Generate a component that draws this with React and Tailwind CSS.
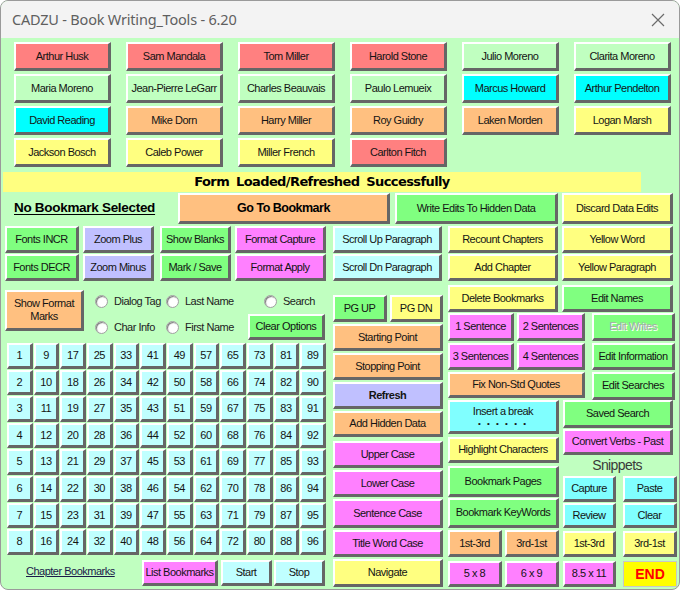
const BTN =
  'flex items-center justify-center text-center leading-[1.15] text-[11px] tracking-[-0.5px] text-[#141414] border-t-2 border-l-2 border-t-white border-l-white border-b-[3px] border-r-[3px] border-b-[#666] border-r-[#666]'

const RED = 'bg-[#ff8080]'
const GRN = 'bg-[#80ff80]'
const LG = 'bg-[#c0ffc0]'
const CY = 'bg-[#00ffff]'
const OR = 'bg-[#ffc080]'
const YE = 'bg-[#ffff80]'
const MA = 'bg-[#ff80ff]'
const LV = 'bg-[#c0c0ff]'
const PC = 'bg-[#c0ffff]'
const AQ = 'bg-[#80ffff]'

const NAMES = [
  [['Arthur Husk', RED], ['Maria Moreno', LG], ['David Reading', CY], ['Jackson Bosch', YE]],
  [['Sam Mandala', RED], ['Jean-Pierre LeGarr', LG], ['Mike Dorn', OR], ['Caleb Power', YE]],
  [['Tom Miller', RED], ['Charles Beauvais', LG], ['Harry Miller', OR], ['Miller French', YE]],
  [['Harold Stone', RED], ['Paulo Lemueix', LG], ['Roy Guidry', OR], ['Carlton Fitch', RED]],
  [['Julio Moreno', LG], ['Marcus Howard', CY], ['Laken Morden', OR]],
  [['Clarita Moreno', LG], ['Arthur Pendelton', CY], ['Logan Marsh', YE]],
]

function Btn({ className = '', children }) {
  return <div className={`${BTN} ${className}`}>{children}</div>
}

function Radio({ label, className = '' }) {
  return (
    <div className={`flex items-center ${className}`}>
      <span className="w-[13px] h-[13px] rounded-full bg-white border border-[#a0a0a0] shadow-[inset_1px_1px_1px_#7a7a7a] shrink-0" />
      <span className="ml-[6px] text-[11px] tracking-[-0.5px] text-[#222]">{label}</span>
    </div>
  )
}

export default function App() {
  const cells = Array.from({ length: 96 }, (_, i) => {
    const r = Math.floor(i / 12)
    const c = i % 12
    return c * 8 + r + 1
  })

  return (
    <div className="w-[680px] h-[590px] overflow-hidden rounded-[8px] border border-[#9a9a9a] bg-[#c0ffc0] font-['Liberation_Sans',Arial,sans-serif]">
      {/* title bar */}
      <div className="h-[37px] bg-[#f3f3f3] flex items-center justify-between pl-[11px] pr-[14px]">
        <span className="font-['Noto_Sans',sans-serif] text-[14.5px] tracking-[-0.2px] text-[#5f5f5f]">
          CADZU - Book Writing_Tools - 6.20
        </span>
        <svg width="14" height="14" viewBox="0 0 14 14" className="mt-[1px]">
          <path d="M1 1 L13 13 M13 1 L1 13" stroke="#6b6b6b" strokeWidth="1.2" />
        </svg>
      </div>

      {/* name buttons */}
      <div className="flex gap-[15px] pl-[13px] pt-[4px]">
        {NAMES.map((col, i) => (
          <div key={i} className="flex flex-col gap-[3px] w-[97px]">
            {col.map(([n, c]) => (
              <Btn key={n} className={`${c} h-[29px]`}>{n}</Btn>
            ))}
          </div>
        ))}
      </div>

      {/* status */}
      <div className="ml-[2px] mt-[5px] h-[20px] w-[638px] bg-[#ffff80] flex items-center justify-center font-['DejaVu_Sans',sans-serif] font-bold text-[13px] tracking-[-0.6px] [word-spacing:3px] text-black">
        Form Loaded/Refreshed Successfully
      </div>

      {/* row 1 */}
      <div className="flex mt-[1px] h-[31px]">
        <div className="w-[177px] pl-[13px] self-center font-bold text-[13.5px] tracking-[-0.3px] underline underline-offset-2 text-black">
          No Bookmark Selected
        </div>
        <Btn className={`${OR} w-[212px] h-[31px] font-bold text-[12.5px] text-black`}>Go To Bookmark</Btn>
        <Btn className={`${GRN} w-[163px] h-[31px] ml-[5px]`}>Write Edits To Hidden Data</Btn>
        <Btn className={`${YE} w-[111px] h-[31px] ml-[4px]`}>Discard Data Edits</Btn>
      </div>

      {/* row 2 */}
      <div className="flex mt-[2px] pl-[4px]">
        {[
          [['Fonts INCR', 'Fonts DECR'], GRN, 'w-[74px]', ''],
          [['Zoom Plus', 'Zoom Minus'], LV, 'w-[71px]', 'ml-[4px]'],
          [['Show Blanks', 'Mark / Save'], GRN, 'w-[71px]', 'ml-[6px]'],
          [['Format Capture', 'Format Apply'], MA, 'w-[91px]', 'ml-[4px]'],
          [['Scroll Up Paragraph', 'Scroll Dn Paragraph'], PC, 'w-[109px]', 'ml-[7px]'],
          [['Recount Chapters', 'Add Chapter'], YE, 'w-[110px]', 'ml-[6px]'],
          [['Yellow Word', 'Yellow Paragraph'], YE, 'w-[111px]', 'ml-[4px]'],
        ].map(([labels, c, w, ml]) => (
          <div key={labels[0]} className={`flex flex-col gap-[1px] ${w} ${ml}`}>
            {labels.map((l) => (
              <Btn key={l} className={`${c} h-[27px]`}>{l}</Btn>
            ))}
          </div>
        ))}
      </div>

      {/* row 3 */}
      <div className="flex mt-[2px]">
        {/* left part */}
        <div className="w-[327px] pl-[4px]">
          <div className="flex h-[58px]">
            <Btn className={`${OR} w-[79px] h-[41px] mt-[7px]`}>
              Show Format
              <br />
              Marks
            </Btn>
            <div className="ml-[11px] flex flex-col">
              <div className="flex items-center mt-[11px] h-[14px]">
                <Radio label="Dialog Tag" className="w-[71px]" />
                <Radio label="Last Name" className="w-[98px]" />
                <Radio label="Search" />
              </div>
              <div className="flex items-center mt-[6px] h-[26px]">
                <Radio label="Char Info" className="w-[71px]" />
                <Radio label="First Name" className="w-[82px]" />
                <Btn className={`${GRN} w-[77px] h-[26px]`}>Clear Options</Btn>
              </div>
            </div>
          </div>

          <div className="ml-[2px] mt-[2px] w-[319px] grid grid-cols-12 gap-[1px]">
            {cells.map((n) => (
              <Btn key={n} className={`${PC} h-[25.6px]`}>{n}</Btn>
            ))}
          </div>

          <div className="flex mt-[5px] h-[26px]">
            <div className="w-[137px] pl-[21px] self-center mb-[3px] text-[11px] tracking-[-0.5px] underline text-[#1a1a4a]">
              Chapter Bookmarks
            </div>
            <Btn className={`${MA} w-[76px]`}>List Bookmarks</Btn>
            <Btn className={`${PC} w-[51px] ml-[3px]`}>Start</Btn>
            <Btn className={`${PC} w-[51px] ml-[2px]`}>Stop</Btn>
          </div>
        </div>

        {/* middle column */}
        <div className="w-[110px] ml-[5px] flex flex-col gap-[2px]">
          <div className="flex mt-[12px] h-[27px]">
            <Btn className={`${GRN} w-[54px]`}>PG UP</Btn>
            <Btn className={`${YE} w-[53px] ml-[3px]`}>PG DN</Btn>
          </div>
          <Btn className={`${OR} h-[27px]`}>Starting Point</Btn>
          <Btn className={`${OR} h-[27px]`}>Stopping Point</Btn>
          <Btn className={`${LV} h-[27px] font-bold text-[#0a0a80]`}>Refresh</Btn>
          <Btn className={`${OR} h-[26px]`}>Add Hidden Data</Btn>
          <Btn className={`${MA} h-[27px] mt-[2px]`}>Upper Case</Btn>
          <Btn className={`${MA} h-[27px]`}>Lower Case</Btn>
          <Btn className={`${MA} h-[29px]`}>Sentence Case</Btn>
          <Btn className={`${MA} h-[27px]`}>Title Word Case</Btn>
          <Btn className={`${YE} h-[28px]`}>Navigate</Btn>
        </div>

        {/* right part */}
        <div className="ml-[5px] w-[230px]">
          <div className="flex mt-[2px] h-[27px]">
            <Btn className={`${YE} w-[110px]`}>Delete Bookmarks</Btn>
            <Btn className={`${GRN} w-[111px] ml-[4px]`}>Edit Names</Btn>
          </div>

          <div className="flex mt-[1px]">
            <div className="w-[137px] flex flex-col gap-[2px]">
              <div className="flex h-[28px]">
                <Btn className={`${MA} w-[66px]`}>1 Sentence</Btn>
                <Btn className={`${MA} w-[68px] ml-[3px]`}>2 Sentences</Btn>
              </div>
              <div className="flex h-[27px]">
                <Btn className={`${MA} w-[66px]`}>3 Sentences</Btn>
                <Btn className={`${MA} w-[68px] ml-[3px]`}>4 Sentences</Btn>
              </div>
              <Btn className={`${OR} h-[26px]`}>Fix Non-Std Quotes</Btn>
            </div>
            <div className="w-[83px] ml-[7px] flex flex-col gap-[2px]">
              <Btn className={`${GRN} h-[28px] text-[#a9a9a9] [text-shadow:1px_1px_0_#ffffff]`}>Edit Writes</Btn>
              <Btn className={`${GRN} h-[27px]`}>Edit Information</Btn>
              <Btn className={`${GRN} h-[28px]`}>Edit Searches</Btn>
            </div>
          </div>

          <div className="flex">
            <div className="w-[111px] flex flex-col">
              <Btn className={`${AQ} h-[34px] flex-col`}>
                <span>Insert a break</span>
                <span className="text-[8px] tracking-[2px] mt-[2px]">• • • • • •</span>
              </Btn>
              <Btn className={`${YE} h-[26px] mt-[3px]`}>Highlight Characters</Btn>
              <Btn className={`${GRN} h-[31px] mt-[3px]`}>Bookmark Pages</Btn>
              <Btn className={`${GRN} h-[30px] mt-[1px]`}>Bookmark KeyWords</Btn>
              <div className="flex h-[27px] mt-[2px]">
                <Btn className={`${OR} w-[54px]`}>1st-3rd</Btn>
                <Btn className={`${OR} w-[54px] ml-[3px]`}>3rd-1st</Btn>
              </div>
              <div className="flex h-[26px] mt-[4px]">
                <Btn className={`${MA} w-[54px]`}>5 x 8</Btn>
                <Btn className={`${MA} w-[54px] ml-[3px]`}>6 x 9</Btn>
              </div>
            </div>

            <div className="w-[114px] ml-[4px] flex flex-col">
              <Btn className={`${GRN} w-[110px] h-[28px]`}>Saved Search</Btn>
              <Btn className={`${MA} w-[110px] h-[26px] mt-[1px]`}>Convert Verbs - Past</Btn>
              <div className="w-[108px] h-[21px] flex items-center justify-center text-[14px] tracking-[-0.6px] text-[#3a3a3a]">
                Snippets
              </div>
              <div className="flex h-[26px]">
                <Btn className={`${AQ} w-[53px]`}>Capture</Btn>
                <Btn className={`${AQ} w-[54px] ml-[7px]`}>Paste</Btn>
              </div>
              <div className="flex h-[25px] mt-[1px]">
                <Btn className={`${AQ} w-[53px]`}>Review</Btn>
                <Btn className={`${AQ} w-[54px] ml-[7px]`}>Clear</Btn>
              </div>
              <div className="flex h-[26px] mt-[3px]">
                <Btn className={`${YE} w-[53px]`}>1st-3rd</Btn>
                <Btn className={`${YE} w-[54px] ml-[7px]`}>3rd-1st</Btn>
              </div>
              <div className="flex h-[26px] mt-[4px]">
                <Btn className={`${MA} w-[53px]`}>8.5 x 11</Btn>
                <div className="w-[54px] ml-[7px] flex items-center justify-center bg-[#ffff00] border border-[#c8c8c8] text-[#ff0000] font-bold text-[14px]">
                  END
                </div>
              </div>
            </div>
          </div>
        </div>
      </div>
    </div>
  )
}
